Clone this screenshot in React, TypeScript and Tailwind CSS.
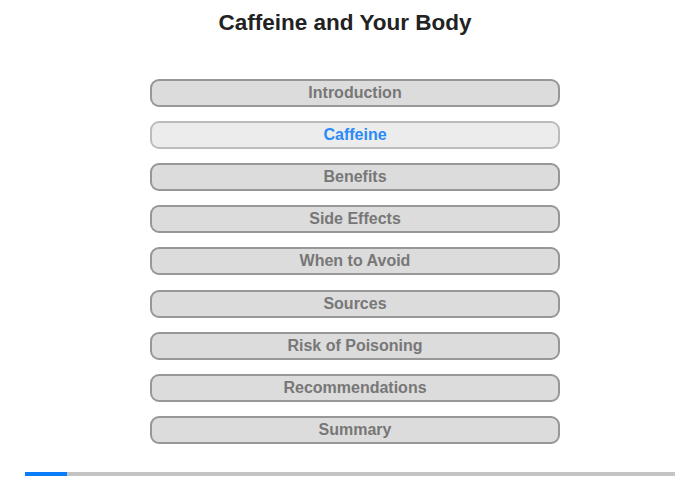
import React from 'react';

const sections = [
  'Introduction',
  'Caffeine',
  'Benefits',
  'Side Effects',
  'When to Avoid',
  'Sources',
  'Risk of Poisoning',
  'Recommendations',
  'Summary',
];

export default function App() {
  const active = 'Caffeine';
  return (
    <div className="w-[700px] h-[480px] bg-white font-['Liberation_Sans',Arial,sans-serif]">
      <h1 className="pt-[9px] w-[690px] text-center text-[22.5px] font-bold leading-[28px] text-[#222222]">
        Caffeine and Your Body
      </h1>
      <div className="mt-[42px] ml-[150px] w-[410px] flex flex-col gap-[14.12px]">
        {sections.map(s => (
          <div
            key={s}
            className={`h-[28px] rounded-[9px] border-2 flex items-center justify-center text-[16px] font-bold ${
              s === active
                ? 'bg-[#ececec] border-[#bcbcbc] text-[#2b8af7]'
                : 'bg-[#dcdcdc] border-[#979797] text-[#777777]'
            }`}
          >
            {s}
          </div>
        ))}
      </div>
      <div className="mt-[28px] ml-[25px] w-[650px] h-[4px] bg-[#c4c4c4] flex">
        <div className="w-[42px] h-full bg-[#0a7dfa]" />
      </div>
    </div>
  );
}
